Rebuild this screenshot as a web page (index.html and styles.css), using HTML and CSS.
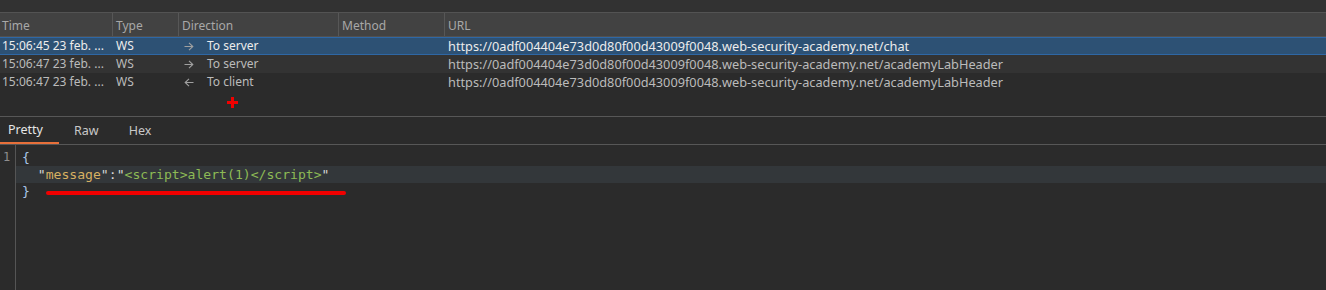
FILE: index.html
```html
<!DOCTYPE html>
<html lang="en">
<head>
  <meta charset="UTF-8">
  <title>WebSockets history</title>
  <link rel="stylesheet" href="styles.css">
</head>
<body>
  <div class="topbar"></div>

  <div class="history">
    <div class="row head">
      <div class="c time">Time</div>
      <div class="c type">Type</div>
      <div class="c dir">Direction</div>
      <div class="c method">Method</div>
      <div class="c url">URL</div>
    </div>
    <div class="row selected">
      <div class="c time">15:06:45 23 feb. ...</div>
      <div class="c type">WS</div>
      <div class="c dir"><svg class="arrow" width="10" height="9" viewBox="0 0 10 9"><path d="M0.5 4.5h8.5M5 0.8l3.8 3.7L5 8.2" fill="none" stroke="#a0a0a0" stroke-width="1.1"/></svg>To server</div>
      <div class="c method"></div>
      <div class="c url">https://0adf004404e73d0d80f00d43009f0048.web-security-academy.net/chat</div>
    </div>
    <div class="row odd">
      <div class="c time">15:06:47 23 feb. ...</div>
      <div class="c type">WS</div>
      <div class="c dir"><svg class="arrow" width="10" height="9" viewBox="0 0 10 9"><path d="M0.5 4.5h8.5M5 0.8l3.8 3.7L5 8.2" fill="none" stroke="#a0a0a0" stroke-width="1.1"/></svg>To server</div>
      <div class="c method"></div>
      <div class="c url">https://0adf004404e73d0d80f00d43009f0048.web-security-academy.net/academyLabHeader</div>
    </div>
    <div class="row">
      <div class="c time">15:06:47 23 feb. ...</div>
      <div class="c type">WS</div>
      <div class="c dir"><svg class="arrow" width="10" height="9" viewBox="0 0 10 9"><path d="M9.5 4.5H1M5 0.8L1.2 4.5 5 8.2" fill="none" stroke="#a0a0a0" stroke-width="1.1"/></svg>To client</div>
      <div class="c method"></div>
      <div class="c url">https://0adf004404e73d0d80f00d43009f0048.web-security-academy.net/academyLabHeader</div>
    </div>
    <div class="spacer">
      <svg class="cross" width="11" height="11" viewBox="0 0 11 11">
        <path d="M4 0h3v4h4v3H7v4H4V7H0V4h4z" fill="#f10000"/>
      </svg>
    </div>
  </div>

  <div class="tabs">
    <a class="tab active">Pretty</a>
    <a class="tab raw">Raw</a>
    <a class="tab hex">Hex</a>
  </div>

  <div class="editor">
    <div class="gutter">
      <div class="ln">1</div>
    </div>
    <div class="code">
      <div class="line"><span class="brace">{</span></div>
      <div class="line hl">  <span class="p">"</span><span class="key">message</span><span class="p">":"</span><span class="str">&lt;script&gt;alert(1)&lt;/script&gt;</span><span class="p">"</span></div>
      <div class="line"><span class="brace">}</span></div>
      <div class="mark"></div>
    </div>
  </div>
</body>
</html>
```

FILE: styles.css
```css
body {
  margin: 0;
  background: #2b2b2b;
  font-family: 'Noto Sans', sans-serif;
  font-size: 12px;
  color: #bbbbbb;
  height: 290px;
  overflow: hidden;
}
.topbar {
  height: 12px;
  background: #323232;
}
.row {
  display: flex;
  height: 18px;
  line-height: 18px;
}
.row.head {
  height: 25px;
  line-height: 25px;
  background: #424242;
  border-top: 1px solid #535353;
  border-bottom: 1px solid #505050;
  box-sizing: border-box;
  color: #a8a8a8;
}
.row.head .c + .c {
  border-left: 1px solid #575757;
}
.row.selected {
  background: #2d5174;
  border-top: 1px solid #2e67a5;
  border-bottom: 1px solid #2e67a5;
  box-sizing: border-box;
  line-height: 16px;
  color: #ececec;
}
.row.odd {
  background: #333333;
}
.c {
  padding-left: 2px;
  white-space: nowrap;
  overflow: hidden;
  box-sizing: border-box;
}
.time { width: 112px; }
.type { width: 66px; padding-left: 4px; }
.dir { width: 160px; padding-left: 6px; }
.method { width: 106px; padding-left: 4px; }
.url { flex: 1; padding-left: 4px; font-size: 12.75px; }
.row.head .url { font-size: 12px; }
.row.head .type, .row.head .dir, .row.head .method, .row.head .url { padding-left: 3px; }
.arrow {
  margin-right: 13px;
  vertical-align: -1px;
}
.spacer {
  height: 25px;
  border-bottom: 1px solid #575757;
  display: flex;
}
.cross {
  margin: 6px 0 0 227px;
}
.tabs {
  display: flex;
  height: 28px;
  border-bottom: 1px solid #575757;
  box-sizing: border-box;
}
.tab {
  line-height: 28px;
  color: #c8c8c8;
  font-size: 12.5px;
}
.tab.active {
  color: #e6e6e6;
  width: 59px;
  padding-left: 8px;
  box-sizing: border-box;
  border-bottom: 2px solid #e8703a;
  line-height: 26px;
}
.tab.raw { margin-left: 15px; }
.tab.hex { margin-left: 30px; }
.editor {
  display: flex;
  height: 150px;
}
.gutter {
  width: 15px;
  border-right: 1px solid #555555;
  padding-top: 4px;
}
.ln {
  height: 17px;
  line-height: 17px;
  padding-left: 3px;
  font-family: 'DejaVu Sans Mono', monospace;
  font-size: 12px;
  color: #8e8e8e;
}
.code {
  flex: 1;
  padding-top: 4px;
  position: relative;
  font-family: 'DejaVu Sans Mono', monospace;
  font-size: 13.1px;
}
.line {
  height: 17px;
  line-height: 17px;
  padding-left: 6px;
  white-space: pre;
  color: #d4d4d4;
}
.line.hl {
  background: #33373a;
}
.brace { color: #a9c6e8; }
.key { color: #d7b061; }
.str { color: #8dba55; }
.p { color: #d8d8d8; }
.mark {
  position: absolute;
  left: 30px;
  top: 46px;
  width: 300px;
  height: 4px;
  border-radius: 2px;
  background: #f10000;
}
```
